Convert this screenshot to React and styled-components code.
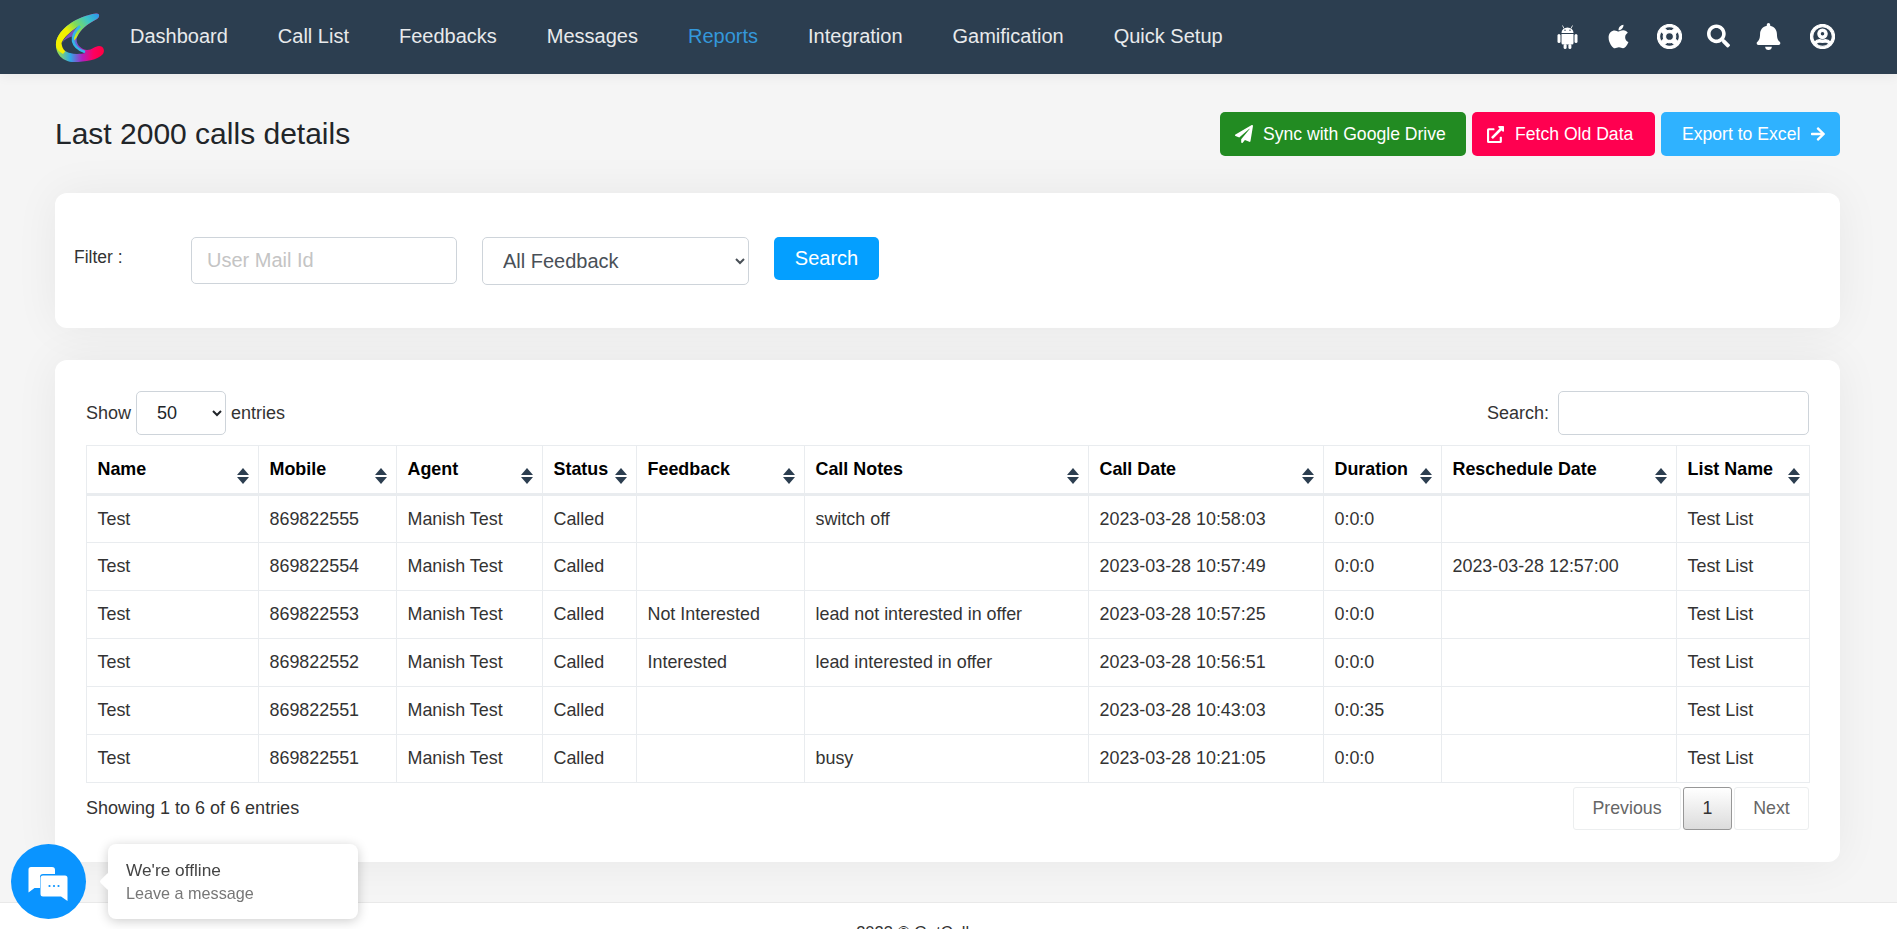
import styled, { createGlobalStyle } from "styled-components";
import {
  FaApple,
  FaRegLifeRing,
  FaSearch,
  FaBell,
  FaRegUserCircle,
  FaPaperPlane,
  FaExternalLinkAlt,
  FaArrowRight,
} from "react-icons/fa";

const GlobalStyle = createGlobalStyle`
  html, body, #root {
    height: 100%;
    margin: 0;
    overflow: hidden;
  }
  body {
    background: #f5f5f5;
    font-family: "Liberation Sans", Arial, sans-serif;
    color: #212529;
  }
  * {
    box-sizing: border-box;
  }
`;

const Nav = styled.nav`
  display: flex;
  align-items: center;
  height: 74px;
  padding: 0 62px 2px 55px;
  background: #2c3e50;
  box-shadow: 0 2px 12px rgba(0, 0, 0, 0.06);
`;

const Logo = styled.svg`
  width: 50px;
  height: 50px;
  margin: 2px 25px 0 0;
  flex: none;
`;

const Menu = styled.div`
  display: flex;
  gap: 50px;
  flex: 1;
`;

const MenuLink = styled.a`
  font-size: 20px;
  color: ${(p) => (p.$active ? "#3498db" : "#e8eaec")};
  white-space: nowrap;
`;

const NavIcons = styled.div`
  display: flex;
  align-items: center;
  gap: 25px;
  color: #fff;
`;

const NavIcon = styled.span`
  display: flex;
  justify-content: flex-start;
  width: ${(p) => p.$w}px;
  font-size: ${(p) => p.$size || 25}px;
  svg {
    display: block;
    stroke: ${(p) => (p.$bold ? "currentColor" : "none")};
    stroke-width: ${(p) => (p.$bold ? 22 : 0)};
  }
`;

const Main = styled.main`
  padding: 38px 57px 40px 55px;
`;

const TopRow = styled.div`
  display: flex;
  justify-content: space-between;
  align-items: center;
  height: 44px;
  margin-bottom: 37px;
`;

const Title = styled.h1`
  margin: 0;
  font-size: 30px;
  font-weight: 400;
  color: #212529;
`;

const Actions = styled.div`
  display: flex;
  gap: 6px;
`;

const ActionButton = styled.button`
  display: flex;
  align-items: center;
  gap: ${(p) => p.$gap || 10}px;
  width: ${(p) => p.$w}px;
  height: 44px;
  padding: 0 0 0 ${(p) => p.$left || 15}px;
  border: none;
  border-radius: 5px;
  background: ${(p) => p.$bg};
  color: #fff;
  font-family: inherit;
  font-size: 17.6px;
  white-space: nowrap;
`;

const Card = styled.section`
  background: #fff;
  border-radius: 12px;
  box-shadow: 0 0 45px rgba(0, 0, 0, 0.06);
`;

const FilterCard = styled(Card)`
  display: flex;
  align-items: flex-start;
  height: 135px;
  padding: 44px 19px;
  margin-bottom: 32px;
`;

const FilterLabel = styled.label`
  width: 117px;
  padding-top: 10px;
  font-size: 17.5px;
  color: #333;
`;

const TextInput = styled.input`
  width: ${(p) => p.$w}px;
  height: ${(p) => p.$h}px;
  padding: 0 15px;
  border: 1px solid #ced4da;
  border-radius: 5px;
  font-family: inherit;
  font-size: 20px;
  &::placeholder {
    color: #c4c4c4;
  }
`;

const FeedbackSelect = styled.select`
  width: 267px;
  height: 48px;
  margin: 0 25px;
  padding: 0 16px;
  border: 1px solid #ced4da;
  border-radius: 5px;
  background: #fff;
  color: #495057;
  font-family: inherit;
  font-size: 20px;
`;

const SearchButton = styled.button`
  width: 105px;
  height: 43px;
  border: none;
  border-radius: 5px;
  background: #049fff;
  color: #fff;
  font-family: inherit;
  font-size: 20px;
`;

const TableCard = styled(Card)`
  height: 502px;
  padding: 31px;
`;

const TableTools = styled.div`
  display: flex;
  justify-content: space-between;
  align-items: center;
  margin-bottom: 10px;
  font-size: 18px;
  color: #333;
`;

const ToolGroup = styled.label`
  display: flex;
  align-items: center;
  gap: ${(p) => p.$gap}px;
`;

const LengthSelect = styled.select`
  width: 90px;
  height: 44px;
  padding: 0 0 0 16px;
  border: 1px solid #ced4da;
  border-radius: 5px;
  background: #fff;
  color: #212529;
  font-family: inherit;
  font-size: 18px;
`;

const Table = styled.table`
  width: 1723px;
  table-layout: fixed;
  border-collapse: collapse;
  font-size: 17.9px;
`;

const Col = styled.col`
  width: ${(p) => p.$w}px;
`;

const Th = styled.th`
  position: relative;
  height: 49px;
  padding: 0 10.5px;
  border: 1px solid #e9ecef;
  border-bottom: 3px solid #e9ecef;
  text-align: left;
  font-weight: 700;
  color: #000;
  white-space: nowrap;
`;

const SortIcon = styled.svg`
  position: absolute;
  right: 9px;
  top: 22px;
  width: 12px;
  height: 16px;
  fill: #2c3e50;
`;

const Td = styled.td`
  height: 48px;
  padding: 0 10.5px;
  border: 1px solid #e9ecef;
  color: #333;
  white-space: nowrap;
`;

const TableFoot = styled.div`
  display: flex;
  justify-content: space-between;
  align-items: center;
  margin-top: 4px;
  font-size: 18px;
  color: #333;
`;

const Pager = styled.div`
  display: flex;
  gap: 2px;
`;

const PageButton = styled.button`
  width: ${(p) => p.$w}px;
  height: 43px;
  border: 1px solid ${(p) => (p.$current ? "#979797" : "#eceeef")};
  border-radius: 3px;
  background: ${(p) =>
    p.$current ? "linear-gradient(to bottom, #fff 0%, #dcdcdc 100%)" : "#fff"};
  color: ${(p) => (p.$current ? "#333" : "#666")};
  font-family: inherit;
  font-size: 17.8px;
`;

const Footer = styled.footer`
  padding: 20px 57px 0 0;
  background: #fff;
  border-top: 1px solid #e9e9e9;
  text-align: center;
  font-size: 16.5px;
  color: #333;
  min-height: 60px;
`;

const ChatWidget = styled.div`
  position: fixed;
  left: 11px;
  bottom: 10px;
  display: flex;
  align-items: center;
  gap: 22px;
`;

const ChatButton = styled.div`
  width: 75px;
  height: 75px;
  border-radius: 50%;
  background: #0a94ff;
  svg {
    display: block;
  }
`;

const ChatBubble = styled.div`
  position: relative;
  width: 250px;
  height: 75px;
  padding: 14px 18px;
  border-radius: 8px;
  background: #fff;
  box-shadow: 0 2px 12px rgba(0, 0, 0, 0.2);
  &::before {
    content: "";
    position: absolute;
    left: -6px;
    top: 31px;
    width: 13px;
    height: 13px;
    background: #fff;
    transform: rotate(45deg);
    border-radius: 2px;
  }
`;

const ChatTitle = styled.div`
  font-size: 17.3px;
  line-height: 24px;
  color: #444;
`;

const ChatSub = styled.div`
  font-size: 16.2px;
  line-height: 22px;
  color: #777;
`;

const menu = [
  "Dashboard",
  "Call List",
  "Feedbacks",
  "Messages",
  "Reports",
  "Integration",
  "Gamification",
  "Quick Setup",
];

const columns = [
  ["Name", 172],
  ["Mobile", 138],
  ["Agent", 146],
  ["Status", 94],
  ["Feedback", 168],
  ["Call Notes", 284],
  ["Call Date", 235],
  ["Duration", 118],
  ["Reschedule Date", 235],
  ["List Name", 133],
];

const rows = [
  ["869822555", "", "switch off", "2023-03-28 10:58:03", "0:0:0", ""],
  ["869822554", "", "", "2023-03-28 10:57:49", "0:0:0", "2023-03-28 12:57:00"],
  ["869822553", "Not Interested", "lead not interested in offer", "2023-03-28 10:57:25", "0:0:0", ""],
  ["869822552", "Interested", "lead interested in offer", "2023-03-28 10:56:51", "0:0:0", ""],
  ["869822551", "", "", "2023-03-28 10:43:03", "0:0:35", ""],
  ["869822551", "", "busy", "2023-03-28 10:21:05", "0:0:0", ""],
];

const BrandLogo = () => (
  <Logo viewBox="0 0 50 50">
    <defs>
      <linearGradient id="arm" x1="0" y1="0.8" x2="1" y2="0.1">
        <stop offset="0" stopColor="#f4ee00" />
        <stop offset="0.35" stopColor="#f0f000" />
        <stop offset="0.55" stopColor="#7fdc5a" />
        <stop offset="0.8" stopColor="#3cc4c8" />
        <stop offset="1" stopColor="#2f9bea" />
      </linearGradient>
      <linearGradient id="base" x1="0" y1="0" x2="1" y2="0">
        <stop offset="0" stopColor="#a6e63a" />
        <stop offset="0.3" stopColor="#2fa8e8" />
        <stop offset="0.55" stopColor="#b01fc0" />
        <stop offset="0.78" stopColor="#ff0060" />
        <stop offset="1" stopColor="#ff0040" />
      </linearGradient>
    </defs>
    <path
      d="M41 1.5 C45 1 45 5 42 7 C32 12 25 18 22 25 C20 31 25 37 32 38 C37 38 40 34 44 34 C49 34 50 39 48 42 C43 48 30 50 19 50 C8 50 0 42 1 31 C3 17 22 4 41 1.5 Z"
      fill="url(#base)"
    />
    <path
      d="M41 1.5 C45 1 45 5 42 7 C32 12 25 18 22 25 L8 42 C3 39 0.5 36 1 31 C3 17 22 4 41 1.5 Z"
      fill="url(#arm)"
    />
    <path
      d="M24 14 C16 19 9 25 6.5 31 C7 37 10 40 15 41 C20 42.5 26 42 30 41 C24 39 18 34 17 28 C17 23 20 18 24 14 Z"
      fill="#2c3e50"
    />
    <path d="M24 14 C16 19 10 25 7 31 C10 27 14 25 17.5 24.5 C19 21 21 17 24 14 Z" fill="#7a52b8" />
    <path d="M25 14 C20 19 17 24 18 29 C19 34 24 38 30 40" fill="none" stroke="#35b5e8" strokeWidth="2.5" />
  </Logo>
);

const AndroidIcon = () => (
  <svg width="21" height="25" viewBox="0 0 21 25" fill="#fff">
    <path d="M4.5 9 a6 5.5 0 0 1 12 0 Z" />
    <path d="M7 4.5 L5.5 1.5 M14 4.5 L15.5 1.5" stroke="#fff" strokeWidth="0.8" />
    <path d="M4.5 10 H16.5 V19 a1.5 1.5 0 0 1 -1.5 1.5 H6 a1.5 1.5 0 0 1 -1.5 -1.5 Z" />
    <rect x="0.5" y="10" width="3" height="9" rx="1.5" />
    <rect x="17.5" y="10" width="3" height="9" rx="1.5" />
    <rect x="6.6" y="20" width="3" height="5" rx="1.5" />
    <rect x="11.4" y="20" width="3" height="5" rx="1.5" />
    <circle cx="8" cy="6.3" r="0.7" fill="#2c3e50" />
    <circle cx="13" cy="6.3" r="0.7" fill="#2c3e50" />
  </svg>
);

const SortArrows = () => (
  <SortIcon viewBox="0 0 12 16">
    <path d="M6 0 L12 7 H0 Z" />
    <path d="M0 9 H12 L6 16 Z" />
  </SortIcon>
);

const ChatGlyph = () => (
  <svg width="75" height="75" viewBox="0 0 75 75">
    <path
      d="M20 23 H41 a3 3 0 0 1 3 3 V30 H32 a3 3 0 0 0 -3 3 V44 H23.5 L17.5 48.5 V25.5 a2.5 2.5 0 0 1 2.5 -2.5 Z"
      fill="#fff"
    />
    <path
      d="M32 31.5 H54 a2.5 2.5 0 0 1 2.5 2.5 V57 L50 52.5 H32 a2.5 2.5 0 0 1 -2.5 -2.5 V34 a2.5 2.5 0 0 1 2.5 -2.5 Z"
      fill="#fff"
    />
    <circle cx="38.5" cy="42" r="1.1" fill="#0a94ff" />
    <circle cx="43" cy="42" r="1.1" fill="#0a94ff" />
    <circle cx="47.5" cy="42" r="1.1" fill="#0a94ff" />
  </svg>
);

export default function App() {
  return (
    <>
      <GlobalStyle />
      <Nav>
        <BrandLogo />
        <Menu>
          {menu.map((item) => (
            <MenuLink key={item} $active={item === "Reports"}>
              {item}
            </MenuLink>
          ))}
        </Menu>
        <NavIcons>
          <NavIcon $w={23}>
            <AndroidIcon />
          </NavIcon>
          <NavIcon $w={27} $size={27}>
            <FaApple />
          </NavIcon>
          <NavIcon $w={25} $bold>
            <FaRegLifeRing />
          </NavIcon>
          <NavIcon $w={23} $size={24}>
            <FaSearch />
          </NavIcon>
          <NavIcon $w={30} $size={27}>
            <FaBell />
          </NavIcon>
          <NavIcon $w={25} $bold>
            <FaRegUserCircle />
          </NavIcon>
        </NavIcons>
      </Nav>

      <Main>
        <TopRow>
          <Title>Last 2000 calls details</Title>
          <Actions>
            <ActionButton $bg="#228b22" $w={246}>
              <FaPaperPlane size={18} />
              Sync with Google Drive
            </ActionButton>
            <ActionButton $bg="#ff0050" $w={183} $gap={11}>
              <FaExternalLinkAlt size={17} />
              Fetch Old Data
            </ActionButton>
            <ActionButton $bg="#2fb2ff" $w={179} $left={21} $gap={10}>
              Export to Excel
              <FaArrowRight size={16} />
            </ActionButton>
          </Actions>
        </TopRow>

        <FilterCard>
          <FilterLabel>Filter :</FilterLabel>
          <TextInput placeholder="User Mail Id" $w={266} $h={47} />
          <FeedbackSelect defaultValue="All Feedback">
            <option>All Feedback</option>
            <option>Interested</option>
            <option>Not Interested</option>
          </FeedbackSelect>
          <SearchButton>Search</SearchButton>
        </FilterCard>

        <TableCard>
          <TableTools>
            <ToolGroup $gap={5}>
              Show
              <LengthSelect defaultValue="50">
                <option>10</option>
                <option>50</option>
                <option>100</option>
              </LengthSelect>
              entries
            </ToolGroup>
            <ToolGroup $gap={9}>
              Search:
              <TextInput $w={251} $h={44} />
            </ToolGroup>
          </TableTools>

          <Table>
            <colgroup>
              {columns.map(([name, w]) => (
                <Col key={name} $w={w} />
              ))}
            </colgroup>
            <thead>
              <tr>
                {columns.map(([name]) => (
                  <Th key={name}>
                    {name}
                    <SortArrows />
                  </Th>
                ))}
              </tr>
            </thead>
            <tbody>
              {rows.map((r) => (
                <tr key={r[3]}>
                  <Td>Test</Td>
                  <Td>{r[0]}</Td>
                  <Td>Manish Test</Td>
                  <Td>Called</Td>
                  <Td>{r[1]}</Td>
                  <Td>{r[2]}</Td>
                  <Td>{r[3]}</Td>
                  <Td>{r[4]}</Td>
                  <Td>{r[5]}</Td>
                  <Td>Test List</Td>
                </tr>
              ))}
            </tbody>
          </Table>

          <TableFoot>
            <span>Showing 1 to 6 of 6 entries</span>
            <Pager>
              <PageButton $w={108}>Previous</PageButton>
              <PageButton $w={49} $current>
                1
              </PageButton>
              <PageButton $w={75}>Next</PageButton>
            </Pager>
          </TableFoot>
        </TableCard>
      </Main>

      <Footer>2023 © GetCaller</Footer>

      <ChatWidget>
        <ChatButton>
          <ChatGlyph />
        </ChatButton>
        <ChatBubble>
          <ChatTitle>We're offline</ChatTitle>
          <ChatSub>Leave a message</ChatSub>
        </ChatBubble>
      </ChatWidget>
    </>
  );
}
